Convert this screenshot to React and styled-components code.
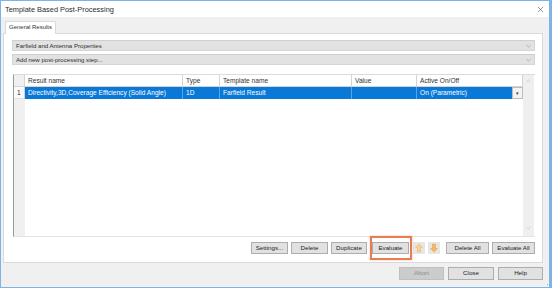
import styled, { createGlobalStyle } from "styled-components";

const GlobalStyle = createGlobalStyle`
  html, body {
    margin: 0;
    padding: 0;
    background: #ffffff;
  }
  * {
    box-sizing: border-box;
  }
`;

const columns = "11px 158px 37px 132px 65px 106px";

const Caret = ({ up, color = "#999" }) => (
  <CaretSvg viewBox="0 0 6 4">
    <path
      d={up ? "M0.5 3.2 L3 0.8 L5.5 3.2" : "M0.5 0.8 L3 3.2 L5.5 0.8"}
      fill="none"
      stroke={color}
      strokeWidth="0.8"
    />
  </CaretSvg>
);

const App = () => {
  return (
    <>
      <GlobalStyle />
      <Window>
        <TitleBar>
          <Title>Template Based Post-Processing</Title>
          <CloseIcon viewBox="0 0 8 8">
            <path d="M1 1 L7 7 M7 1 L1 7" stroke="#666" strokeWidth="0.8" />
          </CloseIcon>
        </TitleBar>

        <Body>
          <TabStrip>
            <Tab>General Results</Tab>
          </TabStrip>

          <Panel>
            <Combo>
              Farfield and Antenna Properties
              <Caret />
            </Combo>
            <Combo>
              Add new post-processing step...
              <Caret />
            </Combo>

            <Grid>
              <GridBody>
                <Row $cols={columns}>
                  <HeadCell $rowHead />
                  <HeadCell>Result name</HeadCell>
                  <HeadCell>Type</HeadCell>
                  <HeadCell>Template name</HeadCell>
                  <HeadCell>Value</HeadCell>
                  <HeadCell>Active On/Off</HeadCell>
                </Row>
                <Row $cols={columns}>
                  <RowNumber>1</RowNumber>
                  <Cell>Directivity,3D,Coverage Efficiency (Solid Angle)</Cell>
                  <Cell>1D</Cell>
                  <Cell>Farfield Result</Cell>
                  <Cell />
                  <ActiveCell>
                    <ActiveText>On (Parametric)</ActiveText>
                    <CellDrop>▾</CellDrop>
                  </ActiveCell>
                </Row>
                <Filler>
                  <FillerHead />
                  <FillerRest />
                </Filler>
              </GridBody>
              <ScrollBar>
                <Caret up color="#c2c2c2" />
                <Caret color="#c2c2c2" />
              </ScrollBar>
            </Grid>

            <ActionBar>
              <Button $w={37}>Settings...</Button>
              <Button $w={37}>Delete</Button>
              <Button $w={36}>Duplicate</Button>
              <Highlight>
                <Button $w={37}>Evaluate</Button>
                <HighlightBox />
              </Highlight>
              <IconButton>
                <svg width="10" height="10" viewBox="0 0 10 10">
                  <path
                    d="M5 1 L8.5 4.5 L6.5 4.5 L6.5 9 L3.5 9 L3.5 4.5 L1.5 4.5 Z"
                    fill="#f7cf95"
                    stroke="#f0b060"
                    strokeWidth="0.5"
                  />
                </svg>
              </IconButton>
              <IconButton>
                <svg width="10" height="10" viewBox="0 0 10 10">
                  <path
                    d="M5 9 L8.5 5.5 L6.5 5.5 L6.5 1 L3.5 1 L3.5 5.5 L1.5 5.5 Z"
                    fill="#f5b766"
                    stroke="#e99a3c"
                    strokeWidth="0.5"
                  />
                </svg>
              </IconButton>
              <Button $w={43} $ml={3}>
                Delete All
              </Button>
              <Button $w={43}>Evaluate All</Button>
            </ActionBar>
          </Panel>

          <Footer>
            <Button $w={45} $h={13} disabled>
              Abort
            </Button>
            <Button $w={46} $h={13}>
              Close
            </Button>
            <Button $w={45} $h={13}>
              Help
            </Button>
          </Footer>
          <Grip viewBox="0 0 6 6">
            <rect x="4" y="0" width="1" height="1" fill="#aaa" />
            <rect x="2" y="2" width="1" height="1" fill="#aaa" />
            <rect x="4" y="2" width="1" height="1" fill="#aaa" />
            <rect x="0" y="4" width="1" height="1" fill="#aaa" />
            <rect x="2" y="4" width="1" height="1" fill="#aaa" />
            <rect x="4" y="4" width="1" height="1" fill="#aaa" />
          </Grip>
        </Body>
      </Window>
    </>
  );
};

const Window = styled.div`
  width: 552px;
  height: 288px;
  border: 1px solid #7fb2e5;
  border-right-width: 3px;
  display: flex;
  flex-direction: column;
  background: #f0f0f0;
  font-family: "Liberation Sans", Arial, sans-serif;
  color: #1e1e1e;
  overflow: hidden;
`;

const TitleBar = styled.div`
  height: 16px;
  background: #ffffff;
  display: flex;
  align-items: center;
  justify-content: space-between;
  padding: 0 5px 0 4px;
`;

const Title = styled.span`
  font-size: 7.4px;
  color: #2b2b2b;
`;

const CloseIcon = styled.svg`
  width: 7px;
  height: 7px;
`;

const CaretSvg = styled.svg`
  width: 5px;
  height: 4px;
  flex-shrink: 0;
`;

const Body = styled.div`
  flex: 1;
  position: relative;
  display: flex;
  flex-direction: column;
  padding: 4px 6px 0 2px;
`;

const TabStrip = styled.div`
  display: flex;
  padding-left: 2px;
  height: 12px;
`;

const Tab = styled.div`
  width: 51px;
  height: 13px;
  background: #ffffff;
  border: 1px solid #d9d9d9;
  border-bottom: none;
  font-size: 6px;
  padding: 2px 0 0 3px;
  color: #333;
  position: relative;
  z-index: 1;
`;

const Panel = styled.div`
  height: 230px;
  background: #ffffff;
  border: 1px solid #dadada;
  display: flex;
  flex-direction: column;
  padding: 6px 7px 7px 8px;
`;

const Combo = styled.div`
  height: 11px;
  margin-bottom: 3px;
  background: #e2e2e2;
  border: 1px solid #d6d6d6;
  border-top-color: #cfcfcf;
  font-size: 6.1px;
  color: #2e2e2e;
  display: flex;
  align-items: center;
  justify-content: space-between;
  padding: 0 3px 0 3px;
`;

const Grid = styled.div`
  margin-top: 6px;
  margin-left: 1px;
  height: 163px;
  display: flex;
  border-left: 1px solid #9a9a9a;
  border-top: 1px solid #dcdcdc;
  border-bottom: 1px solid #e4e4e4;
`;

const GridBody = styled.div`
  width: 509px;
  display: flex;
  flex-direction: column;
`;

const Row = styled.div`
  display: grid;
  grid-template-columns: ${(p) => p.$cols};
  height: 12px;
`;

const HeadCell = styled.div`
  background: ${(p) => (p.$rowHead ? "#f0f0f0" : "#ffffff")};
  border-right: 1px solid #d4d4d4;
  border-bottom: 1px solid #d4d4d4;
  font-size: 6.6px;
  color: #333;
  padding: 2px 0 0 3px;
  white-space: nowrap;
`;

const RowNumber = styled.div`
  background: #fafafa;
  border-right: 1px solid #d4d4d4;
  border-bottom: 1px solid #e0e0e0;
  font-size: 6.6px;
  padding: 2px 0 0 3px;
`;

const Cell = styled.div`
  background: #0a78d6;
  color: #ffffff;
  border-right: 1px solid #5aa3e6;
  font-size: 6.6px;
  padding: 2px 0 0 3px;
  white-space: nowrap;
  overflow: hidden;
`;

const ActiveCell = styled.div`
  display: flex;
`;

const ActiveText = styled.div`
  flex: 1;
  background: #0a78d6;
  color: #ffffff;
  font-size: 6.6px;
  padding: 2px 0 0 3px;
  white-space: nowrap;
`;

const CellDrop = styled.div`
  width: 11px;
  background: #f2f2f2;
  border: 1px solid #bdbdbd;
  font-size: 5px;
  color: #333;
  display: flex;
  align-items: center;
  justify-content: center;
`;

const Filler = styled.div`
  flex: 1;
  display: grid;
  grid-template-columns: 11px 1fr;
`;

const FillerHead = styled.div`
  background: #f0f0f0;
`;

const FillerRest = styled.div`
  background: #ffffff;
`;

const ScrollBar = styled.div`
  width: 11px;
  background: #efefef;
  display: flex;
  flex-direction: column;
  justify-content: space-between;
  align-items: center;
  padding: 4px 0 6px;
`;

const ActionBar = styled.div`
  display: flex;
  justify-content: flex-end;
  align-items: center;
  gap: 3px;
  margin-top: 5px;
`;

const Button = styled.button`
  width: ${(p) => p.$w}px;
  height: ${(p) => p.$h || 12}px;
  margin-left: ${(p) => p.$ml || 0}px;
  padding: 0;
  background: ${(p) => (p.disabled ? "#cccccc" : "#e1e1e1")};
  border: 1px solid ${(p) => (p.disabled ? "#bfbfbf" : "#adadad")};
  color: ${(p) => (p.disabled ? "#8a8a8a" : "#222")};
  font-family: "Liberation Sans", Arial, sans-serif;
  font-size: 6.2px;
  line-height: 1;
  white-space: nowrap;
`;

const Highlight = styled.div`
  position: relative;
  margin: 0 1px 0 2px;
  display: flex;
`;

const HighlightBox = styled.div`
  position: absolute;
  left: -2px;
  right: -3px;
  top: -6px;
  bottom: -6px;
  border: 2px solid #ea7b52;
  box-shadow: 0 0 2px rgba(200, 90, 50, 0.4);
`;

const IconButton = styled.div`
  width: 12px;
  height: 12px;
  background: #e6e6e6;
  display: flex;
  align-items: center;
  justify-content: center;
`;

const Footer = styled.div`
  display: flex;
  justify-content: flex-end;
  gap: 4px;
  margin-top: 4px;
`;

const Grip = styled.svg`
  position: absolute;
  right: -4px;
  bottom: 1px;
  width: 6px;
  height: 6px;
`;

export default App;
